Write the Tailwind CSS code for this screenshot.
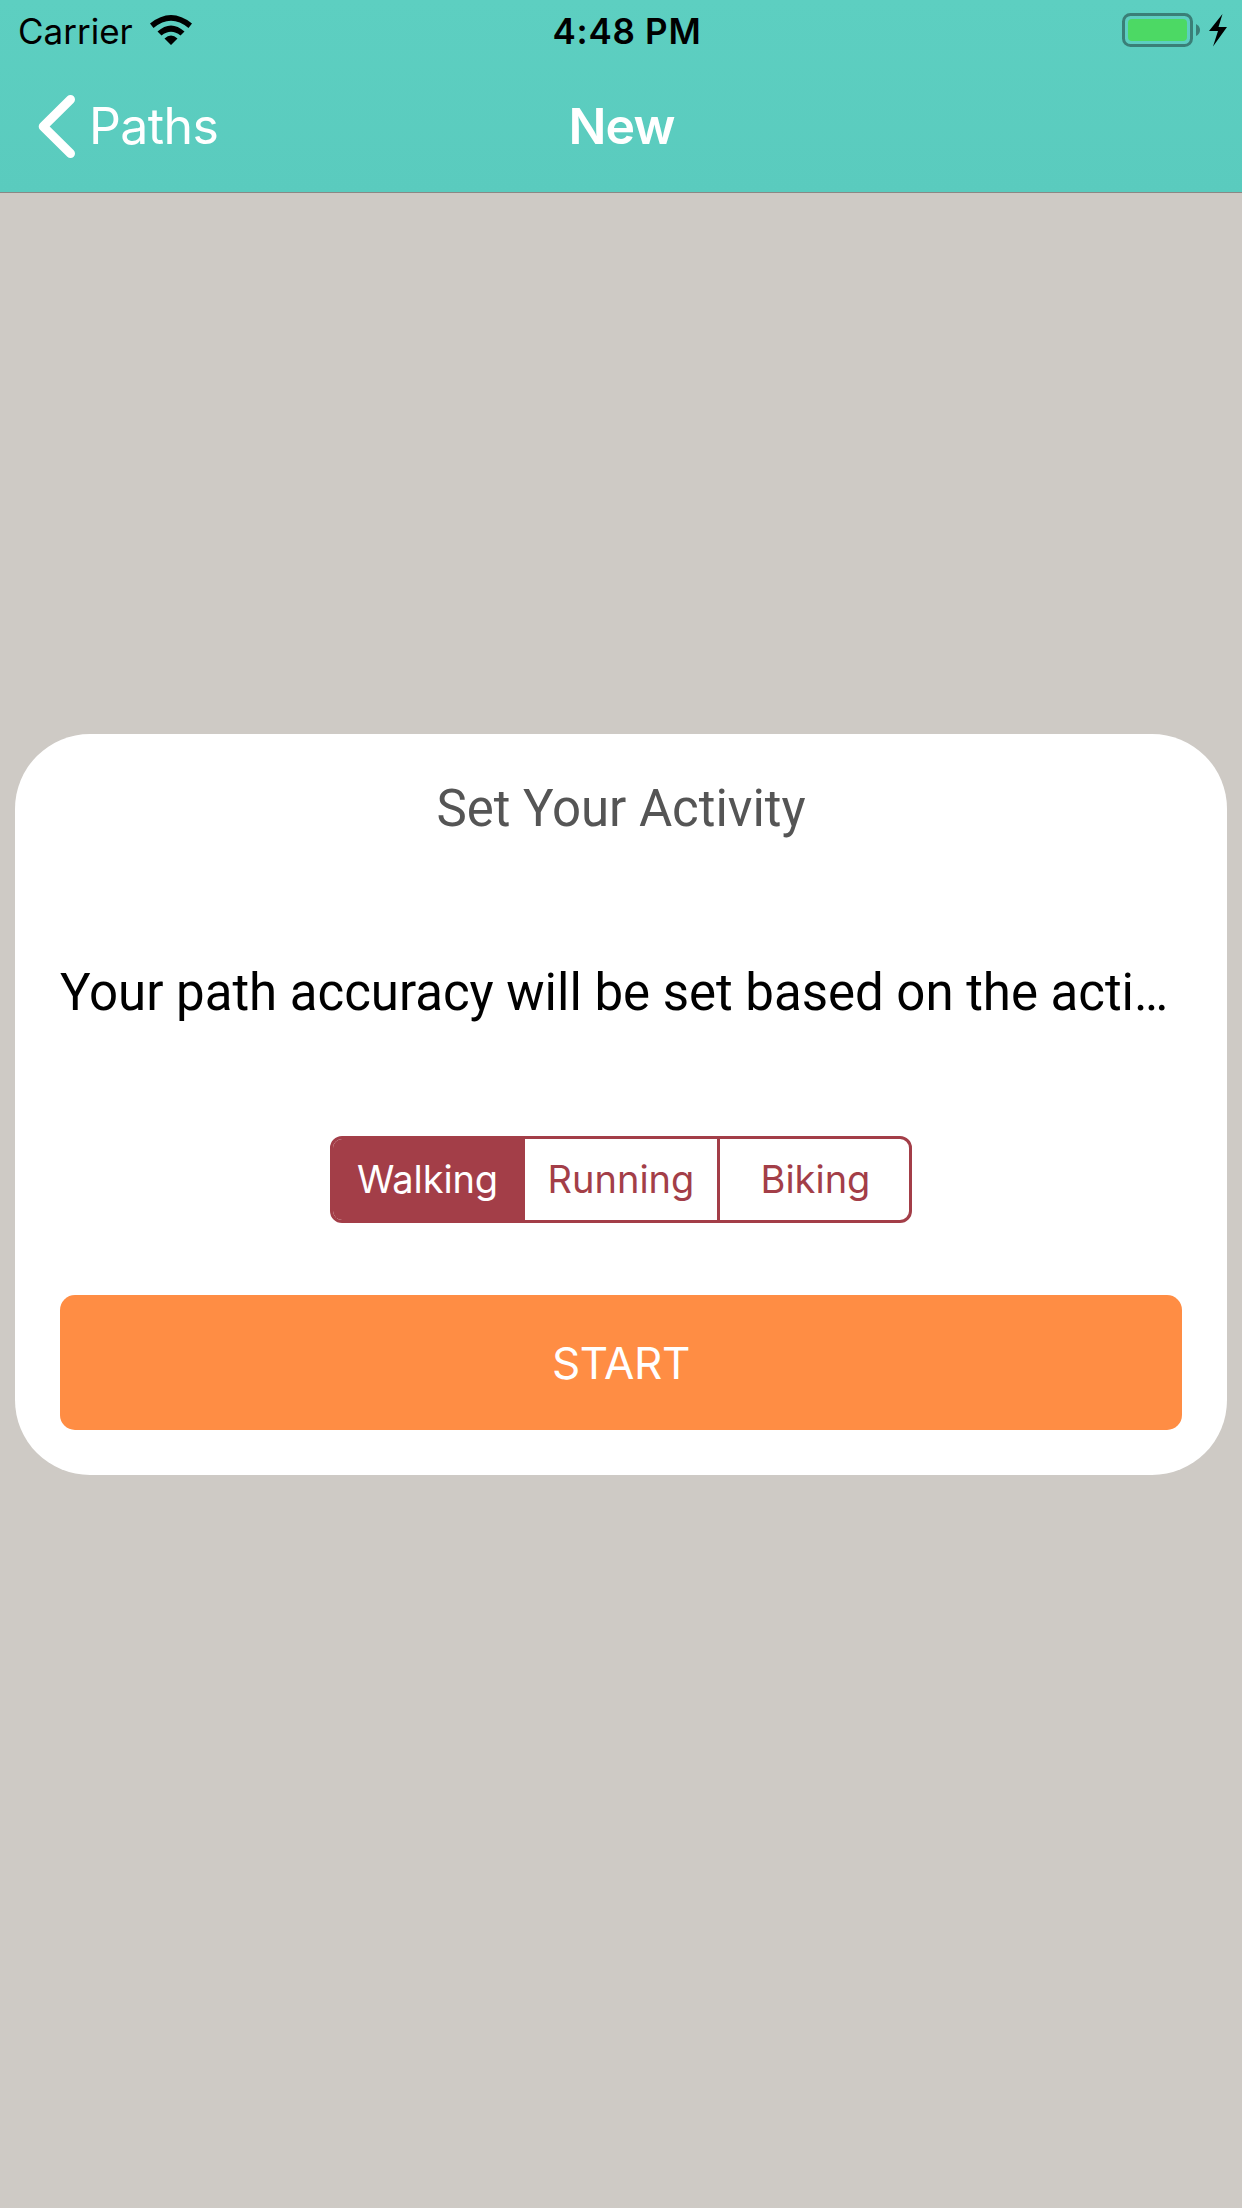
<!DOCTYPE html>
<html lang="en"><head><meta charset="utf-8"><title>New</title>
<script src="https://cdn.jsdelivr.net/npm/@tailwindcss/browser@4"></script></head>
<body class="w-[1242px] h-[2208px] overflow-hidden flex flex-col bg-[#cecac5] font-['Inter',sans-serif]">
<header class="h-[193px] shrink-0 flex flex-col bg-linear-to-b from-[#5dcfc1] to-[#5acbbe] border-b border-[#8b8885]">
  <div class="h-[60px] grid grid-cols-3 items-center text-[35px] leading-[58px] text-black">
    <div class="flex items-center pl-[18px] gap-[17px]">
      <span class="whitespace-nowrap pt-[2px]">Carrier</span>
      <svg class="w-[42px] h-[31px]" viewBox="0 0 42 31"><path d="M0 8.500Q21-8.500 42 8.500L38.500 13Q21-1.500 3.500 13ZM7.500 16.500Q21 4.500 34.500 16.500L30.500 20.500Q21 13 11.500 20.500ZM14.500 23.500Q21 17.500 27.500 23.500L21 30Z"/></svg>
    </div>
    <div class="text-center font-semibold pl-[12px] pt-[2px] tracking-[0.7px]">4:48 PM</div>
    <div class="flex justify-end pr-[15px]">
      <svg class="w-[105px] h-[34px]" viewBox="0 0 105 34"><rect x="1.500" y="1.500" width="68" height="31" rx="7" fill="none" stroke="#3a7f77" stroke-width="3"/><rect x="6" y="6" width="59" height="22" rx="4" fill="#4cd964"/><path d="M74 11Q78 13 78 17T74 23Z" fill="#3a7f77"/><path d="M100.500 1L87 18H96L91 33.500L105 14H96.500Z"/></svg>
    </div>
  </div>
  <nav class="h-[132px] grid grid-cols-3 items-center text-[50px] leading-[132px] text-white">
    <div class="flex items-center pl-[38px] gap-[14px]">
      <svg class="w-[37px] h-[64px]" viewBox="0 0 37 64"><path d="M32.500 5.500L5.200 32.500L32.500 59.500" fill="none" stroke="#fff" stroke-width="9" stroke-linecap="round" stroke-linejoin="round"/></svg>
      <span class="tracking-[-0.6px]">Paths</span>
    </div>
    <h1 class="text-center font-semibold tracking-[-0.9px] pl-[1px]">New</h1>
  </nav>
</header>
<main class="grow px-[15px] pt-[541px]">
  <section class="h-[741px] rounded-[75px] bg-white px-[45px] pt-[45px] flex flex-col items-center font-['Roboto',sans-serif]">
    <h2 class="text-[51px] leading-[60px] text-[#555] tracking-[-0.05px]">Set Your Activity</h2>
    <p class="w-full mt-[124px] text-[51px] leading-[60px] text-black whitespace-nowrap tracking-[-0.02px]">Your path accuracy will be set based on the acti…</p>
    <div class="mt-[113px] w-[582px] h-[87px] shrink-0 flex overflow-hidden rounded-[12px] border-3 border-[#a33e48] text-[38px] leading-[81px] text-[#a33e48] text-center font-['Inter',sans-serif]">
      <button class="w-[192px] pr-[3px] bg-[#a33e48] text-white tracking-[-0.1px]">Walking</button>
      <button class="w-[195px] border-r-3 border-[#a33e48]">Running</button>
      <button class="grow pl-[2px]">Biking</button>
    </div>
    <button class="mt-[72px] w-full h-[135px] shrink-0 rounded-[15px] bg-[#ff8d44] text-[44px] text-white tracking-[-0.4px] font-['Inter',sans-serif]">START</button>
  </section>
</main>
</body></html>
